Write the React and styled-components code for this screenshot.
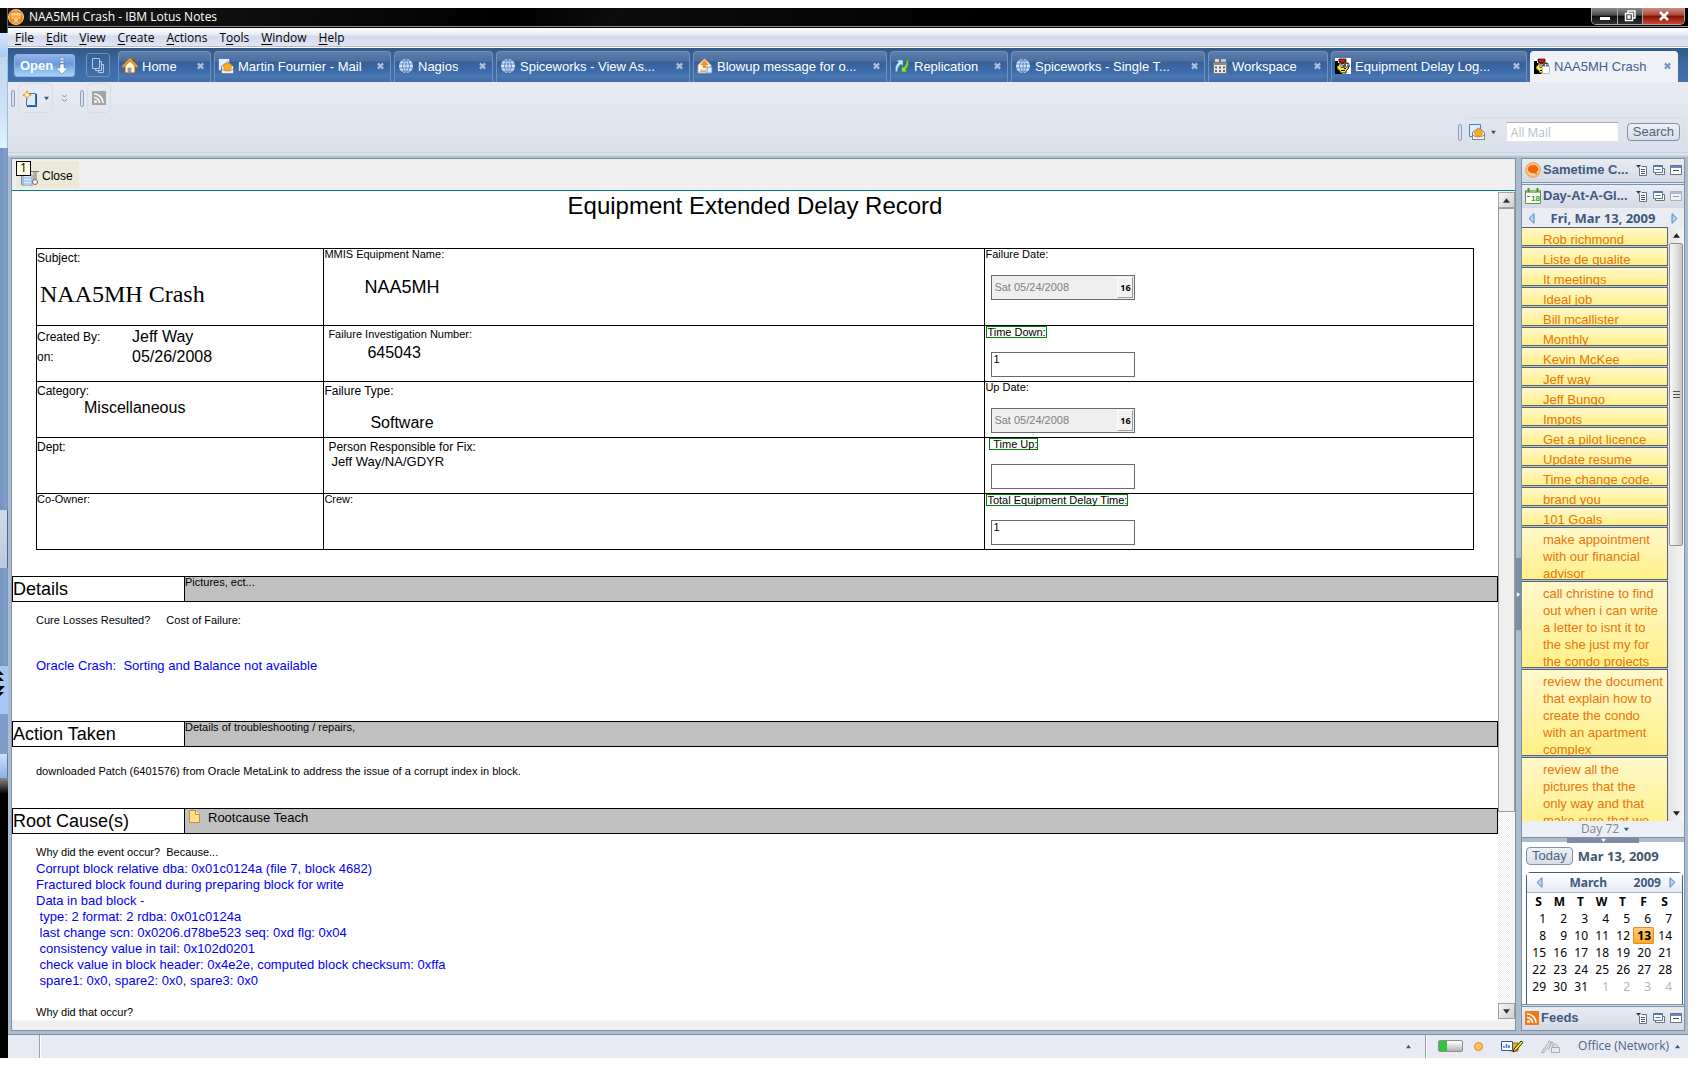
import React from "react";
import styled, { createGlobalStyle, css } from "styled-components";

const sans = '"Liberation Sans", Arial, sans-serif';
const ui = '"Open Sans", "Noto Sans", sans-serif';
const tahoma = '"Noto Sans", Tahoma, sans-serif';
const serif = '"Liberation Serif", "Times New Roman", serif';

const Global = createGlobalStyle`
  *, *::before, *::after { box-sizing: border-box; }
  html, body { margin: 0; background: #fff; }
  body { font-family: ${sans}; font-size: 13px; color: #000; }
  button, input { font: inherit; color: inherit; margin: 0; }
  button { border: 0; background: none; padding: 0; cursor: pointer; }
  svg { display: block; flex: none; }
`;

/* ---------- shell ---------- */
const Screen = styled.div`
  display: flex;
  height: 100vh;
  padding: 8px 8px 8px 0;
  overflow: hidden;
`;
const BackWindow = styled.div`
  flex: 0 0 8px;
  display: flex;
  flex-direction: column;
  background: #000;
  overflow: hidden;
`;
const Strip = styled.div`
  flex: none;
  height: ${(p) => p.$h}px;
  background: ${(p) => p.$bg};
  border-right: 1px solid ${(p) => p.$edge || "transparent"};
`;
const Window = styled.div`
  flex: 1;
  min-width: 0;
  display: flex;
  flex-direction: column;
  background: #adbccd;
`;
const TitleBar = styled.header`
  flex: none;
  height: 20px;
  display: flex;
  align-items: center;
  gap: 5px;
  padding: 0 3px 2px 0;
  background: linear-gradient(100deg, #1a1a1a 0, #000 30%, #0c0c0c 36%, #000 60%);
  border-bottom: 1px solid #000;
  box-shadow: inset 0 -1px #8d8d8d;
  color: #fff;
  font-family: ${ui};
  font-size: 12px;
  line-height: 16px;
`;
const TitleText = styled.span`flex: 1;`;
const WinButtons = styled.div`
  display: flex;
  align-self: flex-start;
  height: 17px;
  border: 1px solid #a5a5a5;
  border-top: 0;
  border-radius: 0 0 5px 5px;
  overflow: hidden;
`;
const WinButton = styled.button`
  width: ${(p) => (p.$close ? 42 : 25)}px;
  display: grid;
  place-items: center;
  background: ${(p) =>
    p.$close
      ? "linear-gradient(#c98f86 0, #b04636 45%, #7c1204 50%, #d0452c 100%)"
      : "linear-gradient(#8c8c8c 0, #4c4c4c 45%, #0c0c0c 50%, #333 100%)"};
  & + & { border-left: 1px solid #a5a5a5; }
`;
const MenuBar = styled.nav`
  flex: none;
  height: 20px;
  display: flex;
  align-items: center;
  gap: 12px;
  padding: 0 7px;
  background: linear-gradient(#fff 0, #e6eaf4 7px, #d4dbee 8px, #e0e4f3 18px, #b4bccf 18px, #b4bccf 19px, #fff 19px);
  font-family: ${ui};
  font-size: 12px;
  line-height: 18px;
`;
const Accel = styled.u`text-underline-offset: 2px;`;

/* ---------- tabs ---------- */
const TabBar = styled.div`
  flex: none;
  height: 34px;
  display: flex;
  align-items: flex-end;
  padding: 0 10px 0 6px;
  background: linear-gradient(#345985, #3b6aa5 50%, #4471ad);
`;
const OpenButton = styled.button`
  width: 61px;
  height: 23px;
  margin: 0 11px 5px 0;
  display: flex;
  align-items: center;
  justify-content: space-between;
  padding: 0 6px 0 5px;
  border: 1px solid #8fb4e6;
  border-radius: 3px;
  background: linear-gradient(#8fb4e8 0, #6a97db 45%, #7fb0ea 60%, #a4d2f6);
  color: #fff;
  font-weight: bold;
`;
const Thumbs = styled.button`
  width: 24px;
  height: 24px;
  margin: 0 8px 5px 0;
  display: grid;
  place-items: center;
  border: 1px solid #7492b9;
  border-radius: 3px;
`;
const Tabs = styled.div`
  flex: 1;
  min-width: 0;
  display: flex;
  gap: 3px;
`;
const Tab = styled.div`
  flex: 0 1 ${(p) => p.$w}px;
  min-width: 0;
  height: 31px;
  display: flex;
  align-items: center;
  justify-content: space-between;
  padding: 0 6px 2px 3px;
  border: 1px solid #7290b9;
  border-bottom: 0;
  border-radius: 4px 4px 0 0;
  background: linear-gradient(#5d7ea9 0, #4c70a0 9px, #375f97 10px, #3f6cab 20px, #4a78b6 24px, #44699f);
  color: #fff;
  ${(p) => p.$active && css`
    background: #eff1f6;
    border-color: #eff1f6;
    color: #3f5e90;
  `}
`;
const TabLabel = styled.button`
  display: flex;
  align-items: center;
  gap: 4px;
  min-width: 0;
  white-space: nowrap;
  overflow: hidden;
`;
const TabClose = styled.button`
  flex: none;
  color: ${(p) => (p.$active ? "#7b9cc2" : "#a9bfdc")};
`;

/* ---------- tool bars ---------- */
const Tools = styled.div`
  flex: none;
  height: 76px;
  display: flex;
  flex-direction: column;
  padding: 1px 4px 0 3px;
  background: linear-gradient(#e8ebf3 0, #dae0e9 70px, #c5ced8 70px, #e3e9ee 72px, #a9b9c8 76px);
`;
const ToolRow = styled.div`
  display: flex;
  align-items: center;
  justify-content: ${(p) => (p.$end ? "flex-end" : "flex-start")};
  height: ${(p) => (p.$end ? 34 : 30)}px;
  padding-top: ${(p) => (p.$end ? 4 : 0)}px;
`;
const Grip = styled.span`
  width: 4px;
  height: 17px;
  margin-right: 3px;
  border: 1px solid #8f9fc0;
  border-radius: 2px;
  background: #d9dfec;
`;
const ToolGroup = styled.div`
  display: flex;
  align-items: center;
  height: 30px;
  gap: 6px;
  padding: 0 ${(p) => p.$pad || 3}px;
  border: 1px solid #d3deeb;
  border-radius: 5px;
`;
const ToolButton = styled.button`
  display: flex;
  align-items: center;
  gap: 6px;
`;
const MoreButton = styled.button`margin: 0 13px 0 9px;`;
const SearchBox = styled.input`
  width: 113px;
  height: 20px;
  margin: 0 2px 0 4px;
  padding: 0 4px;
  border: 1px solid #dfe3ea;
  border-top-color: #a9b0bb;
  background: #fff;
  font-family: ${ui};
  font-size: 12px;
  &::placeholder { color: #b9bcc2; opacity: 1; }
`;
const PillButton = styled.button`
  height: 18px;
  padding: 0 5px;
  border: 1px solid #7e90aa;
  border-radius: 4px;
  background: linear-gradient(#eef1f6, #d8deea);
  color: #4f6379;
  line-height: 16px;
`;

/* ---------- work area ---------- */
const Work = styled.main`
  flex: 1;
  min-height: 0;
  display: flex;
  padding: 0 3px 3px 3px;
`;
const DocPanel = styled.section`
  flex: 1;
  min-width: 0;
  display: flex;
  flex-direction: column;
  border: 1px solid #7b90a9;
  background: #efefef;
`;
const ActionBar = styled.div`
  flex: none;
  height: 32px;
  padding: 2px 4px;
  border-bottom: 1px solid #008284;
`;
const CloseAction = styled.button`
  display: flex;
  align-items: center;
  width: 63px;
  height: 27px;
  background: #ece9d8;
  font-size: 12px;
  line-height: 14px;
`;
const CloseLabel = styled.span`padding-top: 2px;`;
const CloseIcon = styled.span`
  position: relative;
  width: 26px;
  height: 27px;
  padding: 8px 0 0 5px;
`;
const KeyTip = styled.span`
  position: absolute;
  left: 0;
  top: 0;
  width: 15px;
  height: 15px;
  border: 1px solid #000;
  background: #ffffe1;
  font-family: ${ui};
  font-size: 12px;
  line-height: 12px;
`;
const DocBody = styled.div`
  flex: 1;
  min-height: 0;
  display: flex;
  background: #fff;
`;
const Doc = styled.article`
  flex: 1;
  min-width: 0;
  overflow: hidden;
`;
const DocFoot = styled.div`
  flex: none;
  height: 10px;
  border-top: 1px solid #f6f6f6;
`;
const DocTitle = styled.h1`
  margin: 0 0 27px;
  font-size: 24px;
  font-weight: normal;
  line-height: 30px;
  text-align: center;
`;
const Record = styled.table`
  width: calc(100% - 48px);
  margin: 0 24px 26px;
  border-collapse: collapse;
  table-layout: fixed;
  td {
    border: 1px solid #000;
    padding: 0;
    vertical-align: top;
  }
`;
const Row = styled.tr`height: ${(p) => (p.$tall ? 77 : 56)}px;`;
const Cap = styled.div`
  padding: ${(p) => (p.$tight ? 0 : 2)}px 0 0 ${(p) => (p.$in ? 4 : 0)}px;
  font-size: ${(p) => (p.$small ? 11 : 12)}px;
  line-height: ${(p) => (p.$tight ? 10 : p.$small ? 12 : 14)}px;
`;
const Value = styled.div`
  margin-top: ${(p) => p.$top || 0}px;
  padding-left: ${(p) => p.$left}px;
  font-size: ${(p) => p.$size || 16}px;
  line-height: ${(p) => p.$lh || 20}px;
  ${(p) => p.$serif && css`font-family: ${serif};`}
`;
const Pairs = styled.dl`
  display: grid;
  grid-template-columns: 95px 1fr;
  margin: 0;
  padding-top: 1px;
  line-height: 20px;
  dt { font-size: 12px; }
  dd { margin: 0; font-size: 16px; }
`;
const FieldCap = styled.label`
  display: block;
  width: max-content;
  height: 12px;
  font-size: 11px;
  line-height: 10px;
  white-space: pre;
  ${(p) => p.$boxed && css`
    margin-left: ${p.$in ? 4 : 1}px;
    border: 1px solid #008000;
  `}
`;
const Box = styled.div`
  display: flex;
  width: 144px;
  height: 25px;
  margin: 14px 0 0 6px;
  padding: ${(p) => (p.$off ? "1px" : 0)};
  border: 1px solid #6a6a6a;
  background: ${(p) => (p.$off ? "#efefef" : "#fff")};
`;
const BoxInput = styled.input`
  flex: 1;
  min-width: 0;
  padding: 0 1px ${(p) => (p.disabled ? 2 : 12)}px;
  border: 0;
  background: none;
  font-size: 11px;
  line-height: 11px;
  &:disabled { color: #808080; }
`;
const DateButton = styled.button`
  width: 16px;
  border: 1px solid #fff;
  border-right-color: #9c9c9c;
  border-bottom-color: #9c9c9c;
  background: #f2f2f2;
  color: #000;
  font-family: ${tahoma};
  font-size: 9px;
  font-weight: bold;
`;
const SectionBar = styled.div`
  display: flex;
  height: 26px;
  border: 1px solid #000;
  background: #c0c0c0;
  font-size: 11px;
  line-height: 10px;
`;
const SectionName = styled.h2`
  flex: 0 0 172px;
  margin: 0;
  background: #fff;
  border-right: 1px solid #000;
  font-size: 18px;
  font-weight: normal;
  line-height: 25px;
`;
const Teach = styled.a`
  display: flex;
  gap: 8px;
  padding-left: 4px;
  color: #000;
  font-size: 13px;
  line-height: 18px;
  text-decoration: none;
`;
const SectionBody = styled.div`
  padding: ${(p) => p.$top || 12}px 24px ${(p) => p.$bottom || 0}px;
`;
const Small = styled.p`
  margin: 0;
  font-size: 11px;
  line-height: 12px;
`;
const Questions = styled(Small)`
  display: flex;
  gap: 16px;
`;
const Blue = styled.p`
  margin: ${(p) => p.$m};
  color: #00f;
  font-size: 13px;
  line-height: 16px;
  white-space: pre;
`;

/* ---------- scroll bars ---------- */
const Scroll = styled.div`
  flex: 0 0 17px;
  display: flex;
  flex-direction: column;
  padding: 1px 0;
  background: repeating-conic-gradient(#fff 0 25%, #ededed 0 50%) 0 0 / 2px 2px;
`;
const ScrollArrow = styled.button`
  flex: none;
  height: 16px;
  display: grid;
  place-items: center;
  ${(p) => !p.$flat && css`
    border: 1px solid #a3a3a3;
    background: linear-gradient(135deg, #f6f6f6, #cfcfcf);
  `}
`;
const DocThumb = styled.div`
  height: 73%;
  border: 1px solid #9c9c9c;
  background: #efefef;
`;
const Fill = styled.div`flex: 1;`;

/* ---------- side bar ---------- */
const Splitter = styled.div`
  flex: 0 0 4px;
  display: grid;
  grid-template-rows: 400px 72px;
`;
const SplitGrab = styled.div`
  grid-row: 2;
  display: grid;
  place-items: center;
  background: #7c8da3;
`;
const Side = styled.aside`
  flex: 0 0 164px;
  display: flex;
  flex-direction: column;
  border: 1px solid #7b90a9;
  background: #fff;
`;
const SideHead = styled.div`
  flex: none;
  display: flex;
  align-items: center;
  gap: 2px;
  height: ${(p) => (p.$line ? 26 : 23)}px;
  padding: 0 2px 2px 3px;
  background: linear-gradient(#e8ecf3, #d3dae5);
  ${(p) => p.$line === "below" && css`border-bottom: 3px double #7b90a9;`}
  ${(p) => p.$line === "above" && css`border-top: 3px double #7b90a9;`}
`;
const SideTitle = styled.h3`
  flex: 1;
  margin: 0;
  color: #40597f;
  font-size: 13px;
  line-height: 20px;
  white-space: nowrap;
`;
const SideTools = styled.div`
  display: flex;
  gap: 5px;
`;
const DateRow = styled.div`
  flex: none;
  display: flex;
  align-items: center;
  justify-content: space-between;
  height: 19px;
  padding: 1px 6px 0;
  background: #e9edf3;
  color: #40597f;
  font: bold 13px/18px ${tahoma};
`;
const NotesArea = styled.div`
  flex: 1;
  min-height: 0;
  display: flex;
  background: #b9c6d6;
`;
const Notes = styled.ul`
  flex: 1;
  min-width: 0;
  display: flex;
  flex-direction: column;
  gap: 1px;
  margin: 0;
  padding: 0;
  list-style: none;
  overflow: hidden;
`;
const Note = styled.li`
  flex: none;
  height: ${(p) => 2 + 17 * p.$lines}px;
  padding: 3px 0 0 21px;
  border: 1px solid #58626d;
  border-left-width: 0;
  overflow: hidden;
  background: linear-gradient(#fff8cb, #fff088);
  color: #e8750a;
  line-height: 17px;
  white-space: pre;
`;
const NoteScroll = styled.div`
  flex: 0 0 16px;
  display: flex;
  flex-direction: column;
  background: linear-gradient(90deg, #e3e3e3, #f6f6f6);
`;
const NoteThumb = styled.div`
  height: 51%;
  margin: 0 1px;
  display: grid;
  place-items: center;
  border: 1px solid #8f8f8f;
  border-radius: 2px;
  background: linear-gradient(90deg, #f7f7f7, #e3e3e3 50%, #c4c4c4);
`;
const DayCount = styled.button`
  flex: none;
  display: flex;
  align-items: center;
  justify-content: center;
  gap: 5px;
  height: 16px;
  padding-left: 4px;
  background: #eceff6;
  color: #7d838c;
  font-family: ${ui};
  font-size: 12px;
  line-height: 16px;
`;
const HSplit = styled.div`
  flex: none;
  height: 5px;
  display: grid;
  justify-content: center;
  border-top: 1px solid #7b90a9;
  background: #adbccd;
`;
const HGrab = styled.div`
  width: 72px;
  display: grid;
  place-items: center;
  background: #7c8da3;
`;
const CalPanel = styled.div`
  flex: 0 0 162px;
  display: flex;
  flex-direction: column;
  padding: 5px 1px 0 4px;
  overflow: hidden;
`;
const CalTop = styled.div`
  display: flex;
  align-items: center;
  gap: 5px;
  color: #40586b;
  font: bold 13px/18px ${tahoma};
  ${PillButton} { font: 13px/16px ${sans}; }
`;
const Cal = styled.div`
  flex: 1;
  margin-top: 7px;
  border: 1px solid #3f6070;
  border-bottom: 0;
  border-radius: 5px 5px 0 0;
`;
const CalHead = styled.div`
  display: flex;
  align-items: center;
  height: 20px;
  padding: 0 6px 0 9px;
  border-bottom: 1px solid #a9b3c4;
  background: linear-gradient(#fff, #e6eaf3);
  color: #40597f;
  font: bold 12px/19px ${tahoma};
`;
const Month = styled.span`flex: 1; text-align: center;`;
const Year = styled.span`padding-right: 8px;`;
const Days = styled.table`
  width: 147px;
  margin-left: 1px;
  border-collapse: collapse;
  table-layout: fixed;
  font: 12px/17px ${tahoma};
  th { padding: 0; height: 17px; line-height: 16px; }
`;
const Day = styled.td`
  height: 17px;
  padding: 0 3px 0 0;
  text-align: right;
  line-height: 16px;
  color: ${(p) => (p.$out ? "#b3b3b3" : "#000")};
  ${(p) => p.$today && css`
    border-radius: 2px;
    background: linear-gradient(#fcd07a, #f8a91f);
    box-shadow: inset 0 0 0 1px #f0862c;
    font-weight: bold;
  `}
`;

/* ---------- status bar ---------- */
const Status = styled.footer`
  flex: none;
  height: 24px;
  display: flex;
  align-items: center;
  justify-content: flex-end;
  padding: 0 8px 1px 0;
  border-top: 1px solid #7b90a9;
  background: #e7eaf3;
`;
const Divider = styled.span`
  align-self: stretch;
  width: 2px;
  margin: 0 ${(p) => p.$right}px -1px ${(p) => p.$left}px;
  border-left: 1px solid #9aa0ab;
  background: #fff;
`;
const Battery = styled.span`
  width: 25px;
  height: 12px;
  border: 1px solid #8c8c8c;
  border-radius: 2px;
  background: linear-gradient(90deg, #2fc43b 8px, transparent 8px), linear-gradient(#fff, #b5b5b5);
`;
const StatusIcons = styled.div`
  display: flex;
  align-items: center;
  gap: 11px;
`;
const StatusMark = styled.span`margin-left: 18px;`;
const Location = styled.button`
  display: flex;
  align-items: center;
  gap: 6px;
  margin-left: 18px;
  color: #4a6287;
  font-family: ${ui};
  font-size: 12px;
  line-height: 18px;
`;

/* ---------- drawings ---------- */
const Arrow = ({ dir = "down", color = "#34568b", size = 5 }) => {
  const pts = {
    down: "0,1 6,1 3,5", up: "0,5 6,5 3,1", left: "5,0 5,6 1,3", right: "1,0 1,6 5,3",
  }[dir];
  return <svg width={size} height={size} viewBox="0 0 6 6"><polygon points={pts} fill={color} /></svg>;
};
const NavArrow = ({ left }) => (
  <svg width="7" height="11" viewBox="0 0 7 11">
    <path d={left ? "M6 .7v9.6L1 5.500z" : "M1 .7v9.6L6 5.500z"} fill="#b5d4f7" stroke="#4c86c6" />
  </svg>
);
const Cross = () => (
  <svg width="7" height="8" viewBox="0 0 8 8" stroke="currentColor" strokeWidth="2.500"><path d="M1 1l6 6M7 1L1 7" /></svg>
);
const Logo = () => (
  <svg width="16" height="16" viewBox="0 0 16 16">
    <circle cx="8" cy="8" r="7.500" fill="#f38b1f" stroke="#ffce8f" />
    <path d="M2.500 6C4 3 12 3 13.500 6" fill="#ffd7a0" />
    <path d="M3 6.500h2.500v3H4zM6.500 5.500h1v8h-1zM8.500 5.500h1v8h-1zM10.500 6.500H13l-1 3h-1.500z" fill="#fff0d6" />
    <path d="M2.500 7.800h11" stroke="#f38b1f" strokeWidth=".8" />
  </svg>
);
const icons = {
  home: (
    <>
      <path d="M3 8v7h10V8L8 3z" fill="#fff4dc" stroke="#a55a1a" />
      <path d="M11 1h2v5h-2z" fill="#a5451a" />
      <path d="M0.500 9L8 1.500 15.500 9" fill="none" stroke="#f29a27" strokeWidth="2.200" />
      <path d="M6 10h3v5H6z" fill="#7aa8dc" stroke="#c0701a" strokeWidth=".6" />
    </>
  ),
  mail: (
    <>
      <path d="M.5 .5h11v12H.5z" fill="#e3efff" stroke="#4a7fc4" />
      <path d="M3.500 8.500L9.500 4l6 4.500v7h-12z" fill="#fff" stroke="#777" />
      <ellipse cx="9.500" cy="8.800" rx="4" ry="3.600" fill="#fbae24" stroke="#d98a10" strokeWidth=".7" />
      <path d="M3.500 11l3.500 1.800h5L15.500 11v4.500h-12z" fill="#f3f3f3" stroke="#777" strokeWidth=".8" />
    </>
  ),
  globe: (
    <>
      <circle cx="8" cy="8" r="7" fill="#dbe8fb" />
      <path d="M1 6h14M1 10h14M3 2.800h10M3 13.200h10M8 1v14M8 1C3.500 4 3.500 12 8 15M8 1c4.500 3 4.500 11 0 14" stroke="#5f88c4" strokeWidth="1" fill="none" />
    </>
  ),
  blowup: (
    <>
      <path d="M1 7l6.500-6L14 7v8H1z" fill="#fff" stroke="#c9a26a" />
      <path d="M7.500 2L12 7H9.500v3h-4V7H3z" fill="#f7941d" />
      <path d="M3 12h6M3 13.500h6" stroke="#999" strokeWidth=".8" />
      <path d="M10 9h5v6h-5z" fill="#dcecff" stroke="#5d86b8" strokeWidth=".8" />
    </>
  ),
  replication: (
    <>
      <path d="M1.500 14C1 9 2 6 4.500 4.500L3 2h6v6L7 6.200C5 7.500 3.500 10 3 14z" fill="#cfe9fb" stroke="#4389c0" strokeWidth=".7" />
      <path d="M14 1.500c1 5 0 8-2.500 9.700L13 14H7.500V8l1.800 1.600C11.500 8.200 12.500 6 12.300 2z" fill="#8ddf3a" stroke="#2f8a17" strokeWidth=".7" />
    </>
  ),
  workspace: (
    <>
      <path d="M1.500 4.500h13v11h-13z" fill="#e9e9e4" stroke="#77746c" />
      <path d="M3 1h4v3H3z" fill="#f0d9a8" /><path d="M9 1h5v3H9z" fill="#a7c9f0" />
      <path d="M1 5h14v2H1z" fill="#8f8c84" />
      <path d="M3 8.500h2v2H3zM7 8.500h2v2H7zM11 8.500h2v2h-2zM3 12h2v2H3zM7 12h2v2H7zM11 12h2v2h-2z" fill="#5d6b80" />
    </>
  ),
};
const clown = (page) => (
  <>
    <path d="M0 0h16v16H0z" fill="#fff" />
    <path d="M0 3h3v2h1v8h3v3H0z" fill="#000" />
    <path d="M4 5h9l1 3-1 3-2 2v2H5v-2L2 11V8l2-1z" fill="#ffe92e" stroke="#000" strokeWidth=".9" />
    <path d="M4 1h7v3H9v1H6V4H4z" fill="#e2121c" stroke="#000" strokeWidth=".7" />
    <path d="M6 6h3.500v3.500H6zM10.500 5.500H14V9h-3.500z" fill="#fff" stroke="#000" strokeWidth=".6" />
    <path d="M7.500 7H9v2H7.500zM12 6.500h1.500v2H12z" fill="#1c3fd0" />
    <path d="M9 10h2v1H9zM6 12h4v1H6z" fill="#000" />
    {page && <path d="M8.500 8.500h7v7h-7z" fill="#fff" stroke="#bbb" />}
  </>
);
const Icon = ({ name }) => (
  <svg width="16" height="16" viewBox="0 0 16 16">
    {name === "clown" ? clown(false) : name === "clownPage" ? clown(true) : icons[name]}
  </svg>
);
const MenuIcon = () => (
  <svg width="12" height="12" viewBox="0 0 12 12">
    <path d="M0 1h5L2.500 4z" fill="#2f3c4c" />
    <path d="M5.500 2.500h5v9h-7V4" fill="#fff" stroke="#6b7280" />
    <path d="M5 5.500h4M5 7.500h4M5 9.500h4" stroke="#3a567f" />
  </svg>
);
const StackIcon = () => (
  <svg width="12" height="12" viewBox="0 0 12 12">
    <path d="M2.500 4.500h9v6h-9z" fill="#fff" stroke="#6b7280" />
    <path d="M.5 1.500h9v7h-9z" fill="#fff" stroke="#5f7590" />
    <path d="M1 2h8v1H1zM2.500 5h5v1h-5z" fill="#4d7ab5" />
  </svg>
);
const PaneIcon = ({ dim }) => (
  <svg width="12" height="12" viewBox="0 0 12 12" opacity={dim ? 0.45 : 1}>
    <path d="M.5 1.500h11v9H.5z" fill="#fff" stroke="#6b7280" />
    <path d="M1 2h10v2H1z" fill="#5f8ac2" /><path d="M3 6.500h6" stroke="#555" />
  </svg>
);
const RssIcon = ({ color = "#ee7a1c" }) => (
  <svg width="14" height="14" viewBox="0 0 14 14">
    <path d="M0 0h14v14H0z" fill={color} />
    <circle cx="3.500" cy="10.500" r="1.500" fill="#fff" />
    <path d="M2 6.500A5.500 5.500 0 0 1 7.500 12M2 3a9 9 0 0 1 9 9" fill="none" stroke="#fff" strokeWidth="1.600" />
  </svg>
);

const SideHeader = ({ icon, title, line, dim }) => (
  <SideHead $line={line}>
    {icon}
    <SideTitle>{title}</SideTitle>
    <SideTools>
      <button aria-label={`${title} menu`}><MenuIcon /></button>
      <button aria-label={`${title} float`}><StackIcon /></button>
      <button aria-label={`${title} minimize`}><PaneIcon dim={dim} /></button>
    </SideTools>
  </SideHead>
);

/* ---------- data ---------- */
const menus = [
  ["", "F", "ile"], ["", "E", "dit"], ["", "V", "iew"], ["", "C", "reate"],
  ["", "A", "ctions"], ["T", "o", "ols"], ["", "W", "indow"], ["", "H", "elp"],
];
const tabs = [
  ["home", "Home", 93], ["mail", "Martin Fournier - Mail", 177], ["globe", "Nagios", 99],
  ["globe", "Spiceworks - View As...", 194], ["blowup", "Blowup message for o...", 194],
  ["replication", "Replication", 118], ["globe", "Spiceworks - Single T...", 194],
  ["workspace", "Workspace", 120], ["clown", "Equipment Delay Log...", 196],
  ["clownPage", "NAA5MH Crash", 148],
];
const notes = [
  "Rob richmond", "Liste de qualite", "It meetings", "Ideal job", "Bill mcallister",
  "Monthly", "Kevin McKee", "Jeff way", "Jeff Bungo", "Impots", "Get a pilot licence",
  "Update resume", "Time change code.", "brand you", "101 Goals",
  "make appointment\nwith our financial\nadvisor",
  "call christine to find\nout when i can write\na letter to isnt it to\nthe she just my for\nthe condo projects",
  "review the document\nthat explain how to\ncreate the condo\nwith an apartment\ncomplex",
  "review all the\npictures that the\nonly way and that\nmake sure that we",
];
const weeks = [0, 1, 2, 3, 4].map((w) => [1, 2, 3, 4, 5, 6, 7].map((d) => w * 7 + d));
const dump = [
  "Corrupt block relative dba: 0x01c0124a (file 7, block 4682)",
  "Fractured block found during preparing block for write",
  "Data in bad block -",
  " type: 2 format: 2 rdba: 0x01c0124a",
  " last change scn: 0x0206.d78be523 seq: 0xd flg: 0x04",
  " consistency value in tail: 0x102d0201",
  " check value in block header: 0x4e2e, computed block checksum: 0xffa",
  " spare1: 0x0, spare2: 0x0, spare3: 0x0",
].join("\n");

const DateField = ({ id, label }) => (
  <>
    <FieldCap htmlFor={id}>{label}</FieldCap>
    <Box $off>
      <BoxInput id={id} disabled defaultValue="Sat 05/24/2008" />
      <DateButton aria-label={`Pick ${label}`}>16</DateButton>
    </Box>
  </>
);
const TextField = ({ id, label, value, inset }) => (
  <>
    <FieldCap htmlFor={id} $boxed $in={inset}>{label}</FieldCap>
    <Box><BoxInput id={id} defaultValue={value} /></Box>
  </>
);

export default function App() {
  return (
    <Screen>
      <Global />
      <BackWindow>
        <Strip $h={25} $bg="#0a0a0a" $edge="#666" />
        <Strip $h={24} $bg="linear-gradient(#d3e4fb, #a9cbf8)" />
        <Strip $h={91} $bg="linear-gradient(#c4d6ea, #cfe2f5 60%, #dcf6ff)" $edge="#8fc4e4" />
        <Strip $h={362} $bg="linear-gradient(90deg, #7494c2, #7f9fcb)" />
        <Strip $h={58} $bg="linear-gradient(#cfdbea, #b8c8de)" $edge="#46689c" />
        <Strip $h={98} $bg="linear-gradient(90deg, #7494c2, #7f9fcb)" />
        <Strip $h={48} $bg="#a5c7f5">
          <svg width="6" height="34" viewBox="0 0 6 34">
            <path d="M0 5l4 4H0zM0 11l4 4H0zM0 20h5l-5 5zM0 26h4l-4 4z" />
          </svg>
        </Strip>
        <Strip $h={40} $bg="#7f9dcb" />
        <Strip $h={24} $bg="linear-gradient(#cfe0f8, #8bb0e6)" $edge="#4f78b6" />
        <Strip $h={16} $bg="linear-gradient(#888, #000)" />
      </BackWindow>

      <Window>
        <TitleBar>
          <Logo />
          <TitleText>NAA5MH Crash - IBM Lotus Notes</TitleText>
          <WinButtons>
            <WinButton aria-label="Minimize">
              <svg width="12" height="12" viewBox="0 0 12 12"><path d="M1 7h10v3H1z" fill="#fff" /></svg>
            </WinButton>
            <WinButton aria-label="Restore">
              <svg width="12" height="12" viewBox="0 0 12 12" fill="none" stroke="#fff" strokeWidth="1.500">
                <path d="M4 3V1h7v7H9M1.500 3.500h7v7h-7zM4 6h2v2H4z" />
              </svg>
            </WinButton>
            <WinButton $close aria-label="Close window">
              <svg width="12" height="10" viewBox="0 0 12 10" stroke="#fff" strokeWidth="2.500"><path d="M2 1l8 8M10 1L2 9" /></svg>
            </WinButton>
          </WinButtons>
        </TitleBar>
        <MenuBar>
          {menus.map(([a, k, b]) => (
            <button key={k + b}>{a}<Accel>{k}</Accel>{b}</button>
          ))}
        </MenuBar>
        <TabBar>
          <OpenButton>
            Open
            <svg width="12" height="18" viewBox="0 0 12 18">
              <path d="M4 1h4v2H4zM4 4h4v2H4zM4 7h4v4h4l-6 6-6-6h4z" fill="#fff" stroke="#5b7da8" strokeWidth=".6" />
            </svg>
          </OpenButton>
          <Thumbs aria-label="Thumbnails">
            <svg width="13" height="15" viewBox="0 0 13 15" fill="none" stroke="#b9c9df">
              <path d="M.5 .5h7v10h-7zM7.500 3.500h2v9H3.500v-2M9.500 6.500h2v8H6.500v-2" />
            </svg>
          </Thumbs>
          <Tabs>
            {tabs.map(([icon, label, w], i) => {
              const active = i === tabs.length - 1;
              return (
                <Tab key={label} $w={w} $active={active}>
                  <TabLabel><Icon name={icon} />{label}</TabLabel>
                  <TabClose $active={active} aria-label={`Close ${label}`}><Cross /></TabClose>
                </Tab>
              );
            })}
          </Tabs>
        </TabBar>
        <Tools>
          <ToolRow>
            <Grip />
            <ToolGroup>
              <ToolButton aria-label="New">
                <svg width="16" height="17" viewBox="0 0 16 17">
                  <path d="M4.500 3.500h9v12h-9z" fill="#dcebfb" stroke="#3c6fae" />
                  <path d="M14.500 4v12.500H5" stroke="#23508c" fill="none" />
                  <path d="M5 .8L6.300 3.700 9.200 5 6.300 6.300 5 9.200 3.700 6.300.8 5l2.900-1.300z" fill="#fff6d8" stroke="#e89412" />
                </svg>
                <Arrow />
              </ToolButton>
            </ToolGroup>
            <MoreButton aria-label="More tools">
              <svg width="5" height="9" viewBox="0 0 5 9" fill="none" stroke="#888"><path d="M0 .5L2.500 3 5 .5M0 5l2.500 2.500L5 5" /></svg>
            </MoreButton>
            <Grip />
            <ToolGroup $pad={4}>
              <ToolButton aria-label="Subscribe"><RssIcon color="#a4a4a4" /></ToolButton>
            </ToolGroup>
          </ToolRow>
          <ToolRow $end>
            <Grip />
            <ToolGroup>
              <ToolButton aria-label="Search scope"><Icon name="mail" /><Arrow /></ToolButton>
              <SearchBox aria-label="Search mail" placeholder="All Mail" />
              <PillButton>Search</PillButton>
            </ToolGroup>
          </ToolRow>
        </Tools>

        <Work>
          <DocPanel>
            <ActionBar>
              <CloseAction>
                <CloseIcon>
                  <svg width="18" height="17" viewBox="0 0 18 17">
                    <path d="M.5 1v15M2 6h9v11H2z" stroke="#6d93c4" fill="#dbe9fb" />
                    <path d="M3 9h7M3 12h7M3 15h7" stroke="#8fb4e6" />
                    <path d="M10 2.500h8M13 3v9M15 3v9" stroke="#777" fill="none" />
                    <circle cx="14" cy="13" r="2.500" fill="#fff" stroke="#666" />
                  </svg>
                  <KeyTip>1</KeyTip>
                </CloseIcon>
                <CloseLabel>Close</CloseLabel>
              </CloseAction>
            </ActionBar>
            <DocBody>
              <Doc>
                <DocTitle>Equipment Extended Delay Record</DocTitle>
                <Record>
                  <colgroup>
                    <col style={{ width: "20%" }} />
                    <col style={{ width: "46%" }} />
                    <col style={{ width: "34%" }} />
                  </colgroup>
                  <tbody>
                    <Row $tall>
                      <td><Cap>Subject:</Cap><Value $left={3} $top={15} $size={24} $lh={28} $serif>NAA5MH Crash</Value></td>
                      <td><Cap $small $tight>MMIS Equipment Name:</Cap><Value $left={40} $top={18} $size={18}>NAA5MH</Value></td>
                      <td><DateField id="failure-date" label="Failure Date:" /></td>
                    </Row>
                    <Row>
                      <td>
                        <Pairs><dt>Created By:</dt><dd>Jeff Way</dd><dt>on:</dt><dd>05/26/2008</dd></Pairs>
                      </td>
                      <td><Cap $small $in>Failure Investigation Number:</Cap><Value $left={43} $top={3}>645043</Value></td>
                      <td><TextField id="time-down" label="Time Down:" value="1" /></td>
                    </Row>
                    <Row>
                      <td><Cap>Category:</Cap><Value $left={47}>Miscellaneous</Value></td>
                      <td><Cap>Failure Type:</Cap><Value $left={46} $top={15}>Software</Value></td>
                      <td><DateField id="up-date" label="Up Date:" /></td>
                    </Row>
                    <Row>
                      <td><Cap>Dept:</Cap></td>
                      <td><Cap $in>Person Responsible for Fix:</Cap><Value $left={7} $size={13} $lh={15}>Jeff Way/NA/GDYR</Value></td>
                      <td><TextField id="time-up" label=" Time Up:" value="" inset /></td>
                    </Row>
                    <Row>
                      <td><Cap $small $tight>Co-Owner:</Cap></td>
                      <td><Cap $small $tight>Crew:</Cap></td>
                      <td><TextField id="total-delay" label="Total Equipment Delay Time:" value="1" /></td>
                    </Row>
                  </tbody>
                </Record>

                <SectionBar><SectionName>Details</SectionName>Pictures, ect...</SectionBar>
                <SectionBody $bottom={47}>
                  <Questions><span>Cure Losses Resulted?</span><span>Cost of Failure:</span></Questions>
                  <Blue $m="32px 0 0">{"Oracle Crash:  Sorting and Balance not available"}</Blue>
                </SectionBody>

                <SectionBar><SectionName>Action Taken</SectionName>Details of troubleshooting / repairs,</SectionBar>
                <SectionBody $top={18} $bottom={31}>
                  <Small>downloaded Patch (6401576) from Oracle MetaLink to address the issue of a corrupt index in block.</Small>
                </SectionBody>

                <SectionBar>
                  <SectionName>Root Cause(s)</SectionName>
                  <Teach href="#rootcause">
                    <svg width="11" height="14" viewBox="0 0 11 14">
                      <path d="M.5 1.500h6l4 4v8H.5z" fill="#ffe08a" stroke="#d08a2e" />
                      <path d="M6.500 1.500v4h4" fill="#fff6dc" stroke="#d08a2e" />
                    </svg>
                    Rootcause Teach
                  </Teach>
                </SectionBar>
                <SectionBody>
                  <Small>Why did the event occur?&nbsp; Because...</Small>
                  <Blue $m="3px 0 17px">{dump}</Blue>
                  <Small>Why did that occur?</Small>
                </SectionBody>
              </Doc>
              <Scroll>
                <ScrollArrow aria-label="Scroll up"><Arrow dir="up" color="#333" size={7} /></ScrollArrow>
                <DocThumb />
                <Fill />
                <ScrollArrow aria-label="Scroll down"><Arrow color="#333" size={7} /></ScrollArrow>
              </Scroll>
            </DocBody>
            <DocFoot />
          </DocPanel>

          <Splitter>
            <SplitGrab><Arrow dir="right" color="#fff" size={5} /></SplitGrab>
          </Splitter>

          <Side>
            <SideHeader
              line="below"
              title="Sametime C..."
              icon={
                <svg width="16" height="16" viewBox="0 0 16 16">
                  <circle cx="8" cy="8" r="7.300" fill="#ffc98a" stroke="#e8943c" />
                  <path d="M8 3c3.300 0 5.300 1.700 5.300 4 0 1.500-.8 2.600-2 3.200l1.200 2.800-3.600-2.100C5 11.200 2.700 9.500 2.700 7 2.700 4.700 4.700 3 8 3z" fill="#f4650a" />
                </svg>
              }
            />
            <SideHeader
              dim
              title="Day-At-A-Gl..."
              icon={
                <svg width="16" height="16" viewBox="0 0 16 16">
                  <path d="M.5 2.500h15v13H.5z" fill="#fff" stroke="#5c9440" />
                  <path d="M1 2h14v3H1z" fill="#8cc46a" />
                  <path d="M3.500 0v4M12.500 0v4" stroke="#4c8a34" strokeWidth="2" />
                  <text x="6" y="13" fontSize="8" fontWeight="bold" fill="#3f9a1f" fontFamily="Liberation Sans">18</text>
                  <path d="M2 8.500h3" stroke="#777" />
                </svg>
              }
            />
            <DateRow>
              <button aria-label="Previous day"><NavArrow left /></button>
              Fri, Mar 13, 2009
              <button aria-label="Next day"><NavArrow /></button>
            </DateRow>
            <NotesArea>
              <Notes>
                {notes.map((n) => <Note key={n} $lines={n.split("\n").length}>{n}</Note>)}
              </Notes>
              <NoteScroll>
                <ScrollArrow $flat aria-label="Notes up"><Arrow dir="up" color="#222" size={7} /></ScrollArrow>
                <NoteThumb>
                  <svg width="7" height="9" viewBox="0 0 7 9" stroke="#555"><path d="M0 1.500h7M0 4.500h7M0 7.500h7" /></svg>
                </NoteThumb>
                <Fill />
                <ScrollArrow $flat aria-label="Notes down"><Arrow color="#222" size={7} /></ScrollArrow>
              </NoteScroll>
            </NotesArea>
            <DayCount>Day 72 <Arrow /></DayCount>
            <HSplit><HGrab><Arrow color="#fff" size={5} /></HGrab></HSplit>
            <CalPanel>
              <CalTop><PillButton>Today</PillButton>Mar 13, 2009</CalTop>
              <Cal>
                <CalHead>
                  <button aria-label="Previous month"><NavArrow left /></button>
                  <Month>March</Month>
                  <Year>2009</Year>
                  <button aria-label="Next month"><NavArrow /></button>
                </CalHead>
                <Days>
                  <thead><tr>{[..."SMTWTFS"].map((d, i) => <th key={i}>{d}</th>)}</tr></thead>
                  <tbody>
                    {weeks.map((w) => (
                      <tr key={w[0]}>
                        {w.map((d) => <Day key={d} $out={d > 31} $today={d === 13}>{d > 31 ? d - 31 : d}</Day>)}
                      </tr>
                    ))}
                  </tbody>
                </Days>
              </Cal>
            </CalPanel>
            <SideHeader line="above" title="Feeds" icon={<RssIcon />} />
          </Side>
        </Work>

        <Status>
          <Divider $left={31} $right={0} />
          <Fill />
          <Arrow dir="up" />
          <Divider $left={14} $right={11} />
          <StatusIcons>
            <Battery />
            <svg width="9" height="9" viewBox="0 0 9 9"><circle cx="4.500" cy="4.500" r="4" fill="#ffc65c" stroke="#d98324" /></svg>
          </StatusIcons>
          <StatusMark>
            <svg width="22" height="13" viewBox="0 0 22 13">
              <path d="M9 3h8v8H9z" fill="#f0a83c" stroke="#a06a1a" />
              <path d="M.5 1.500h11v9H.5z" fill="#fff" stroke="#2f55a5" />
              <path d="M3 8V6M5.500 8V4M8 8V5" stroke="#2f6fd0" strokeWidth="1.500" />
              <path d="M12 12l1-3 7-8 2 1.500-7 8z" fill="#ffe600" stroke="#000" strokeWidth=".8" />
            </svg>
          </StatusMark>
          <StatusMark>
            <svg width="19" height="13" viewBox="0 0 19 13" fill="none" stroke="#a9a9a9">
              <path d="M.5 12.500L7 3l1-2 2 1-1 2-6.500 8.500zM7 10l3-5V2.500h2V8M10.500 7.500h8v5h-8zM12.500 7c0-4 4-4 4 0" />
            </svg>
          </StatusMark>
          <Location>Office (Network) <Arrow dir="up" /></Location>
        </Status>
      </Window>
    </Screen>
  );
}
